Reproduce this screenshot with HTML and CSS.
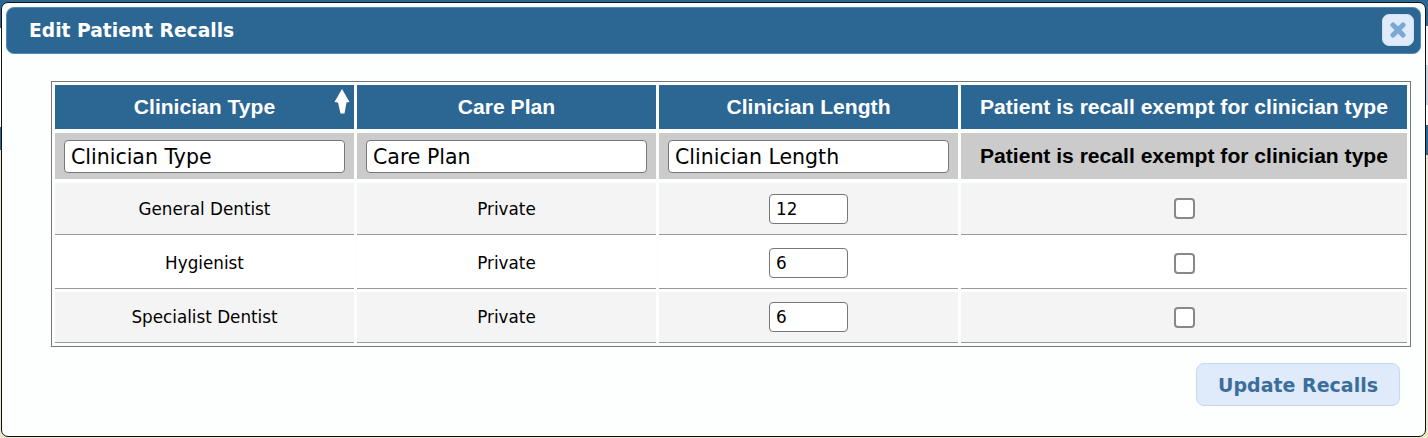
FILE: index.html
```html
<!DOCTYPE html>
<html lang="en">
<head>
<meta charset="utf-8">
<title>Edit Patient Recalls</title>
<link rel="stylesheet" href="styles.css">
</head>
<body>
<div class="dialog">
  <header class="titlebar">
    <h1 class="title">Edit Patient Recalls</h1>
    <button class="close" type="button" aria-label="Close">
      <svg width="16" height="16" viewBox="0 0 16 16"><path d="M3 3 13 13M13 3 3 13" fill="none" stroke="#7aa7d4" stroke-width="5" stroke-linecap="round"/></svg>
    </button>
  </header>
  <div class="content">
    <table class="grid">
      <thead>
        <tr class="heads">
          <th class="col-1 sorted">Clinician Type
            <svg class="sort" width="16" height="26" viewBox="0 0 16 26"><path d="M8 0 15.500 13 12.500 13.500 10.500 24.500 6.500 24.500 4 13.500 .5 13z" fill="#fff"/></svg>
          </th>
          <th class="col-2">Care Plan</th>
          <th class="col-3">Clinician Length</th>
          <th class="col-4">Patient is recall exempt for clinician type</th>
        </tr>
        <tr class="filters">
          <th><input class="filter" type="text" value="Clinician Type"></th>
          <th><input class="filter" type="text" value="Care Plan"></th>
          <th><input class="filter" type="text" value="Clinician Length"></th>
          <th>Patient is recall exempt for clinician type</th>
        </tr>
      </thead>
      <tbody>
        <tr class="odd first">
          <td>General Dentist</td><td>Private</td>
          <td><input class="num" type="text" value="12"></td>
          <td><span class="check"></span></td>
        </tr>
        <tr>
          <td>Hygienist</td><td>Private</td>
          <td><input class="num" type="text" value="6"></td>
          <td><span class="check"></span></td>
        </tr>
        <tr class="odd">
          <td>Specialist Dentist</td><td>Private</td>
          <td><input class="num" type="text" value="6"></td>
          <td><span class="check"></span></td>
        </tr>
      </tbody>
    </table>
    <div class="actions"><button class="update" type="button">Update Recalls</button></div>
  </div>
</div>
</body>
</html>
```
FILE: styles.css
```css
* { box-sizing: border-box; }
html, body { margin: 0; height: 100%; }
body {
  width: 1428px;
  height: 438px;
  overflow: hidden;
  padding: 2px 2px 1px 1px;
  background:
    linear-gradient(#2c6693 0 28px, #fdfefe 28px 127px, #2c6693 127px 150px, #efe8c8 150px) left / 50% 100% no-repeat,
    linear-gradient(#2c6693 0 26px, #f4f4f4 26px 65px, #c6d4e6 65px 105px, #fdfefe 105px 125px, #2c6693 125px 155px, #efe8c8 155px) right / 50% 100% no-repeat;
  font-family: "DejaVu Sans", sans-serif;
  color: #000;
}
.dialog {
  height: 435px;
  background: #fdfefe;
  border: 1px solid #111;
  border-radius: 7px;
  padding: 4px 4px 0 4px;
}
.titlebar {
  height: 47px;
  display: flex;
  align-items: center;
  justify-content: space-between;
  background: #2c6693;
  border: 1px solid #4f8ac0;
  border-radius: 8px;
  padding: 0 6px 0 22px;
}
.title {
  margin: 0;
  font-size: 18.7px;
  font-weight: 700;
  color: #fff;
}
.close {
  width: 32px;
  height: 32px;
  margin-bottom: 1px;
  padding: 0;
  display: flex;
  align-items: center;
  justify-content: center;
  background: #dfebfa;
  border: 1px solid #cfdff0;
  border-radius: 7px;
}
.content { padding: 27px 10px 0 45px; }
.grid {
  width: 1360px;
  table-layout: fixed;
  border: 1px solid #777;
  border-collapse: separate;
  border-spacing: 3px;
}
.col-1, .col-2, .col-3 { width: 299px; }
.heads th {
  height: 45px;
  padding: 0;
  background: #2c6693;
  border-bottom: 1px solid #fdfefe;
  color: #fff;
  font: 700 21.1px "Liberation Sans", Arial, sans-serif;
  text-align: center;
}
.sorted { position: relative; }
.sort { position: absolute; top: 4px; right: 4px; filter: blur(.6px); }
.filters th {
  height: 47px;
  padding: 0 9px;
  background: #cbcbcb;
  border-bottom: 1px solid #fdfefe;
  font: 700 21.1px "Liberation Sans", Arial, sans-serif;
  text-align: center;
}
.filter {
  display: block;
  width: 100%;
  height: 33px;
  padding: 1px 6px 0;
  background: #fff;
  border: 1px solid #777;
  border-radius: 4px;
  font: 20.500px "DejaVu Sans", sans-serif;
  color: #000;
}
tbody td {
  height: 51px;
  padding: 0;
  text-align: center;
  font-size: 16.800px;
  background: #fff;
  border-bottom: 1px solid #999;
}
tbody tr.first td { height: 52px; }
tbody tr.odd td { background: #f4f4f4; }
.num {
  display: block;
  margin: 0 auto;
  width: 79px;
  height: 30px;
  padding: 0 6px;
  background: #fff;
  border: 1px solid #777;
  border-radius: 4px;
  font: 16.800px "DejaVu Sans", sans-serif;
  color: #000;
}
.check {
  display: block;
  margin: 0 auto;
  width: 21px;
  height: 21px;
  background: #fff;
  border: 2px solid #888;
  border-radius: 4px;
}
.actions {
  display: flex;
  justify-content: flex-end;
  padding: 16px 11px 0 0;
}
.update {
  width: 204px;
  height: 43px;
  padding: 0;
  background: #dfebfa;
  border: 1px solid #c5d8ec;
  border-radius: 8px;
  font: 700 19px "DejaVu Sans", sans-serif;
  color: #3c6e9c;
}
```
